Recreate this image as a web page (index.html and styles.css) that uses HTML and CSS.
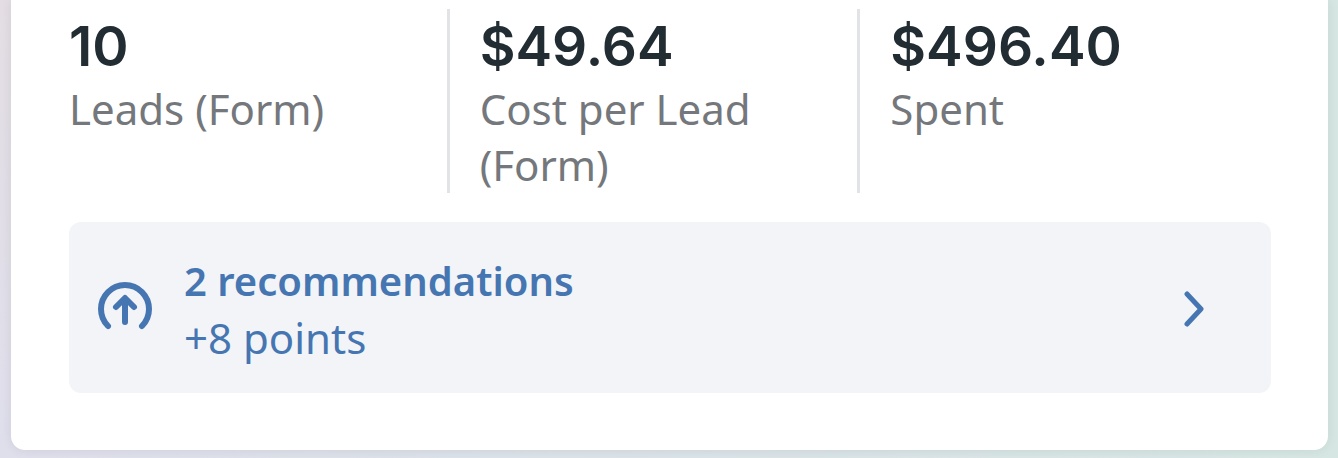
FILE: index.html
```html
<!DOCTYPE html>
<html lang="en">

<head>
    <meta charset="UTF-8">
    <meta name="viewport" content="width=device-width, initial-scale=1.0">
    <title>Ad results</title>
    <link rel="stylesheet" href="styles.css">
</head>

<body>
    <main class="card">
        <dl class="stats">
            <div class="stat">
                <dd>10</dd>
                <dt>Leads (Form)</dt>
            </div>
            <div class="stat">
                <dd>$49.64</dd>
                <dt>Cost per Lead (Form)</dt>
            </div>
            <div class="stat">
                <dd>$496.40</dd>
                <dt>Spent</dt>
            </div>
        </dl>

        <button type="button" class="recommendations">
            <svg class="score-icon" viewBox="0 0 56 56" aria-hidden="true">
                <path d="M11 45A24 24 0 1 1 45 45M28 41V18M19 26L28 17L37 26" />
            </svg>
            <span class="text">
                <strong>2 recommendations</strong>
                <span>+8 points</span>
            </span>
            <svg class="chevron" viewBox="0 0 20 36" aria-hidden="true">
                <path d="M3 3L17 18L3 33" />
            </svg>
        </button>
    </main>
</body>

</html>
```

FILE: styles.css
```css
* {
    box-sizing: border-box;
}

body {
    margin: 0;
    padding: 0 10px 8px 11px;
    min-height: 100vh;
    font-family: "Noto Sans", sans-serif;
    font-size: 42px;
    line-height: 57px;
    background: linear-gradient(90deg, transparent, #d6e7e3), linear-gradient(#e4dee4, #dfdfec);
}

.card {
    padding: 9px 57px 57px 58px;
    background-color: #fff;
    border-radius: 0 0 14px 14px;
    box-shadow: 0 0 12px rgba(0, 0, 0, 0.08);
}

.stats {
    display: grid;
    grid-template-columns: repeat(3, 1fr);
    gap: 30px;
    margin: 0 0 29px;
}

.stat {
    padding-top: 2px;
    border-right: 3px solid #e2e3e7;
}

.stat:last-child {
    border-right: none;
}

.stat dd {
    margin: 0;
    font-family: Inter, sans-serif;
    font-size: 55px;
    font-weight: 600;
    line-height: 70px;
    color: #222c33;
}

.stat dt {
    line-height: 56px;
    color: #74777b;
}

.recommendations {
    display: flex;
    align-items: center;
    width: 100%;
    padding: 30px 67px 27px 28px;
    border: none;
    border-radius: 12px;
    background-color: #f2f4f8;
    color: #4676b1;
    font: inherit;
    text-align: left;
    cursor: pointer;
}

.recommendations svg {
    flex: none;
    fill: none;
    stroke: currentColor;
    stroke-width: 5;
    stroke-linecap: round;
    stroke-linejoin: round;
}

.score-icon {
    width: 56px;
    height: 56px;
}

.score-icon path {
    stroke-width: 6;
}

.text {
    flex: 1;
    display: flex;
    flex-direction: column;
    padding-left: 31px;
}

.text strong {
    font-size: 40px;
    font-weight: 600;
}

.chevron {
    width: 20px;
    height: 36px;
}

@media (max-width: 900px) {
    .stats {
        grid-template-columns: 1fr;
    }

    .stat {
        border-right: none;
    }
}
```
